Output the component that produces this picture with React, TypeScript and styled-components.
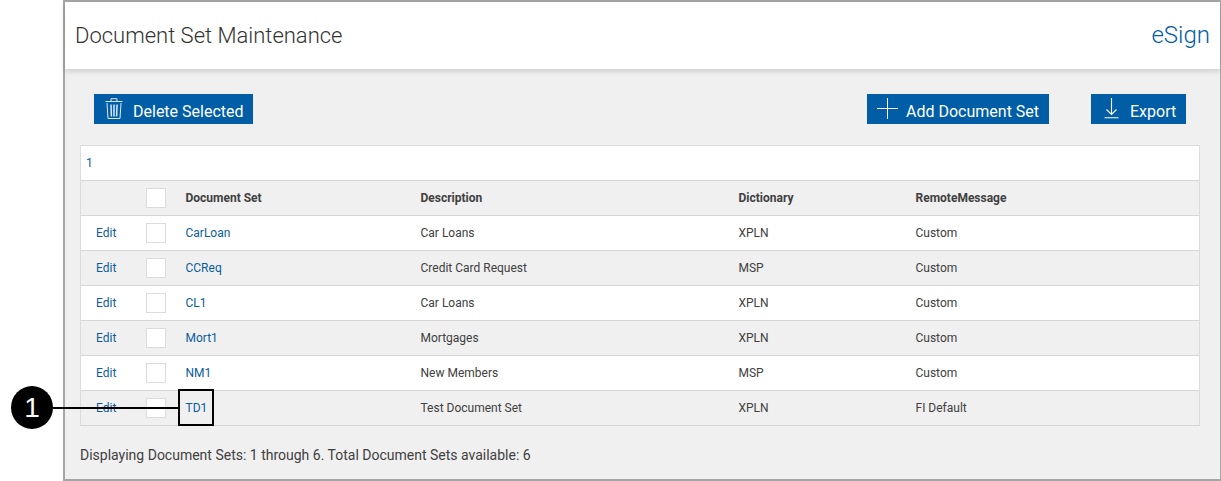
import React from "react";
import styled, { createGlobalStyle } from "styled-components";

const Global = createGlobalStyle`
  html, body { margin: 0; padding: 0; background: #fff; }
  body { font-family: Roboto, "Liberation Sans", sans-serif; }
`;

const Page = styled.div`
  position: relative;
  width: 1221px;
  height: 481px;
  padding-left: 63px;
  box-sizing: border-box;
  overflow: hidden;
`;

const Frame = styled.div`
  width: 1158px;
  height: 481px;
  box-sizing: border-box;
  border: 2px solid #a6a6a6;
  border-right-width: 1px;
  background: #f0f0f0;
  display: flex;
  flex-direction: column;
`;

const Header = styled.header`
  height: 67px;
  box-sizing: border-box;
  flex: none;
  background: #fff;
  box-shadow: 0 2px 6px rgba(0, 0, 0, 0.16);
  display: flex;
  align-items: center;
  justify-content: space-between;
  padding: 0 10px 1px 10px;
`;

const Title = styled.h1`
  margin: 0;
  font-size: 22px;
  font-weight: 300;
  color: #333;
`;

const Brand = styled.span`
  font-size: 24px;
  font-weight: 300;
  color: #005da6;
`;

const Toolbar = styled.div`
  display: flex;
  align-items: center;
  padding: 25px 0 0 29px;
  height: 30px;
`;

const Button = styled.button<{ $left?: number; $gap: number; $pad: number; $width: number }>`
  width: ${(p) => p.$width}px;
  height: 30px;
  box-sizing: border-box;
  border: 0;
  background: #005da6;
  color: #fff;
  font-family: inherit;
  font-size: 16px;
  font-weight: 400;
  display: flex;
  align-items: center;
  gap: ${(p) => p.$gap}px;
  padding: 4px 0 0 ${(p) => p.$pad}px;
  margin-left: ${(p) => p.$left ?? 0}px;
  white-space: nowrap;

  svg {
    align-self: flex-start;
    flex: none;
  }
`;

const Table = styled.div`
  margin: 21px 19px 0 15px;
  width: 1120px;
  box-sizing: border-box;
  border: 1px solid #dcdcdc;
  border-bottom: 0;
  background: #fff;
  font-size: 12px;
  color: #404040;
`;

const Pager = styled.div`
  height: 34px;
  display: flex;
  align-items: center;
  padding-left: 5px;
  color: #0b5c9e;
`;

const Row = styled.div<{ $shade?: boolean; $head?: boolean; $last?: boolean }>`
  height: ${(p) => (p.$last ? 36 : 35)}px;
  box-sizing: border-box;
  border-top: 1px solid #d6d6d6;
  border-bottom: ${(p) => (p.$last ? "1px solid #d6d6d6" : "0")};
  display: grid;
  grid-template-columns: 65px 39.5px 235px 318px 177px 1fr;
  align-items: center;
  background: ${(p) => (p.$shade ? "#f0f0f0" : "#fff")};
  font-weight: ${(p) => (p.$head ? 700 : 400)};
`;

const EditCell = styled.a`
  padding-left: 15px;
  color: #0b5c9e;
`;

const Check = styled.span`
  display: block;
  width: 18px;
  height: 18px;
  border: 1px solid #dcdcdc;
  background: #fff;
`;

const LinkCell = styled.a`
  color: #0b5c9e;
`;

const Footer = styled.div`
  margin: 21px 0 0 15px;
  font-size: 14px;
  color: #404040;
`;

const Callout = styled.div`
  position: absolute;
  left: 11px;
  top: 386px;
  width: 42px;
  height: 43px;
  border-radius: 50%;
  background: #000;
  color: #fff;
  font-size: 28px;
  font-family: "Liberation Sans", Arial, sans-serif;
  display: flex;
  align-items: center;
  justify-content: center;
`;

const Leader = styled.div`
  position: absolute;
  left: 53px;
  top: 407px;
  width: 126px;
  height: 2px;
  background: #000;
`;

const Highlight = styled.div`
  position: absolute;
  left: 178px;
  top: 389px;
  width: 36px;
  height: 37px;
  box-sizing: border-box;
  border: 2px solid #000;
`;

const rows = [
  ["CarLoan", "Car Loans", "XPLN", "Custom"],
  ["CCReq", "Credit Card Request", "MSP", "Custom"],
  ["CL1", "Car Loans", "XPLN", "Custom"],
  ["Mort1", "Mortgages", "XPLN", "Custom"],
  ["NM1", "New Members", "MSP", "Custom"],
  ["TD1", "Test Document Set", "XPLN", "FI Default"],
];

const TrashIcon = () => (
  <svg width="18" height="21" viewBox="0 0 18 21" fill="none" stroke="#dbe8f3" strokeWidth="1">
    <path d="M0.5 3.5h17M6 3V0.7h6V3M2 5l1 15.5h12l1-15.5" />
    <path d="M6 6.5l.4 12M9 6.5v12M12 6.5l-.4 12" strokeWidth="1.5" />
  </svg>
);

const PlusIcon = () => (
  <svg width="21" height="21" viewBox="0 0 21 21" fill="none" stroke="#fff" strokeWidth="1">
    <path d="M10.5 0v21M0 10.5h21" />
  </svg>
);

const DownloadIcon = () => (
  <svg width="15" height="21" viewBox="0 0 15 21" fill="none" stroke="#fff" strokeWidth="1.1">
    <path d="M7.5 0v16.5M2.5 11.5l5 5 5-5M0.5 19.8h14" />
  </svg>
);

export default function App() {
  return (
    <Page>
      <Global />
      <Frame>
        <Header>
          <Title>Document Set Maintenance</Title>
          <Brand>eSign</Brand>
        </Header>
        <Toolbar>
          <Button $width={159} $pad={11} $gap={10}><TrashIcon />Delete Selected</Button>
          <Button $width={182} $left={614} $pad={10} $gap={8}><PlusIcon />Add Document Set</Button>
          <Button $width={95} $left={42} $pad={13} $gap={11}><DownloadIcon />Export</Button>
        </Toolbar>
        <Table>
          <Pager>1</Pager>
          <Row $shade $head>
            <span />
            <Check />
            <span>Document Set</span>
            <span>Description</span>
            <span>Dictionary</span>
            <span>RemoteMessage</span>
          </Row>
          {rows.map((r, i) => (
            <Row key={r[0]} $shade={i % 2 === 1} $last={i === rows.length - 1}>
              <EditCell>Edit</EditCell>
              <Check />
              <LinkCell>{r[0]}</LinkCell>
              <span>{r[1]}</span>
              <span>{r[2]}</span>
              <span>{r[3]}</span>
            </Row>
          ))}
        </Table>
        <Footer>Displaying Document Sets: 1 through 6. Total Document Sets available: 6</Footer>
      </Frame>
      <Leader />
      <Highlight />
      <Callout>1</Callout>
    </Page>
  );
}
